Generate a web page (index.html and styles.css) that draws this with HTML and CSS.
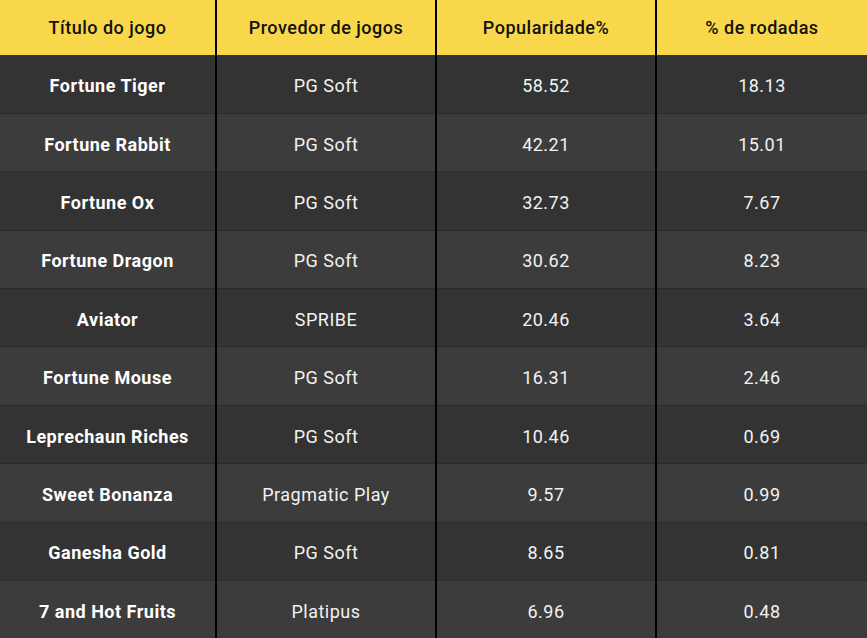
FILE: index.html
```html
<!DOCTYPE html>
<html lang="pt">
<head>
<meta charset="utf-8">
<link rel="stylesheet" href="styles.css">
</head>
<body>
<table class="games">
  <thead>
    <tr>
      <th>Título do jogo</th>
      <th>Provedor de jogos</th>
      <th>Popularidade%</th>
      <th>% de rodadas</th>
    </tr>
  </thead>
  <tbody>
    <tr><td class="name">Fortune Tiger</td><td>PG Soft</td><td>58.52</td><td>18.13</td></tr>
    <tr><td class="name">Fortune Rabbit</td><td>PG Soft</td><td>42.21</td><td>15.01</td></tr>
    <tr><td class="name">Fortune Ox</td><td>PG Soft</td><td>32.73</td><td>7.67</td></tr>
    <tr><td class="name">Fortune Dragon</td><td>PG Soft</td><td>30.62</td><td>8.23</td></tr>
    <tr><td class="name">Aviator</td><td>SPRIBE</td><td>20.46</td><td>3.64</td></tr>
    <tr><td class="name">Fortune Mouse</td><td>PG Soft</td><td>16.31</td><td>2.46</td></tr>
    <tr><td class="name">Leprechaun Riches</td><td>PG Soft</td><td>10.46</td><td>0.69</td></tr>
    <tr><td class="name">Sweet Bonanza</td><td>Pragmatic Play</td><td>9.57</td><td>0.99</td></tr>
    <tr><td class="name">Ganesha Gold</td><td>PG Soft</td><td>8.65</td><td>0.81</td></tr>
    <tr><td class="name">7 and Hot Fruits</td><td>Platipus</td><td>6.96</td><td>0.48</td></tr>
  </tbody>
</table>
</body>
</html>
```

FILE: styles.css
```css
html, body {
  margin: 0;
  padding: 0;
  background: #333333;
  overflow: hidden;
}
.games {
  width: 867px;
  border-collapse: collapse;
  table-layout: fixed;
  font-family: Roboto, "Liberation Sans", sans-serif;
  font-size: 18px;
  letter-spacing: 0.5px;
}
.games th:nth-child(1), .games td:nth-child(1) { width: 216px; }
.games th:nth-child(2), .games td:nth-child(2) { width: 220px; }
.games th:nth-child(3), .games td:nth-child(3) { width: 220px; }
.games th {
  height: 55px;
  padding: 0;
  background: #f9d74a;
  color: #111;
  font-weight: 500;
  text-align: center;
  border-left: 2px solid #000;
  box-sizing: border-box;
}
.games td {
  height: 58.4px;
  padding: 3px 0 0;
  color: #f2f2f2;
  text-align: center;
  border-left: 2px solid #000;
  border-top: 1px solid #2b2b2b;
  box-sizing: border-box;
}
.games th:first-child, .games td:first-child { border-left: none; }
.games tbody tr:first-child td { border-top: none; }
.games tbody tr:nth-child(odd) { background: #333333; }
.games tbody tr:nth-child(even) { background: #3c3c3c; }
.games td.name {
  font-weight: 700;
  color: #ffffff;
}
```
